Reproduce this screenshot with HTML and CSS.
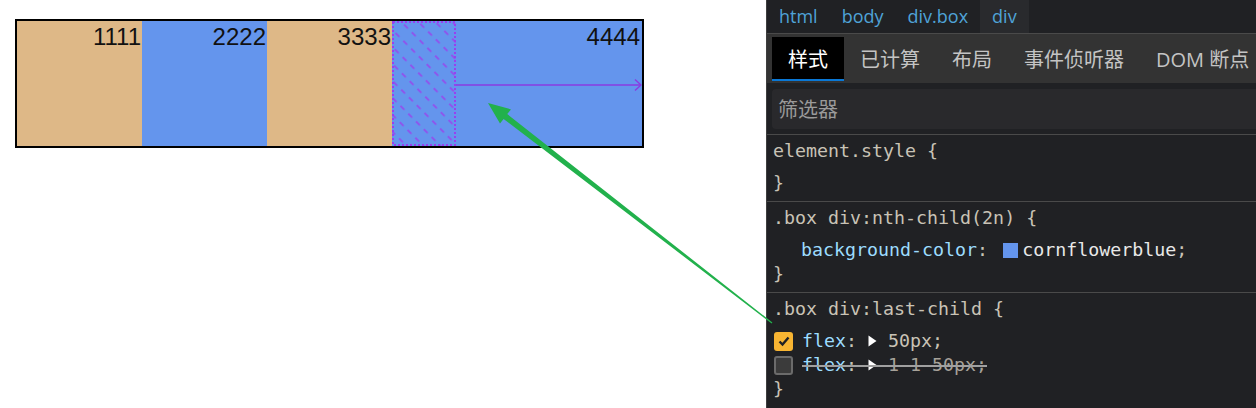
FILE: index.html
```html
<!DOCTYPE html>
<html lang="zh-CN">
<head>
<meta charset="utf-8">
<title>flex devtools</title>
<link rel="stylesheet" href="styles.css">
</head>
<body>
<div class="page">
  <section class="stage">
    <div class="box">
      <div class="item tan">1111</div>
      <div class="item blue">2222</div>
      <div class="item tan">3333</div>
      <div class="item blue last">
        <span class="label">4444</span>
        <svg class="basis" width="64" height="125" viewBox="0 0 64 125">
          <defs>
            <pattern id="hatch" width="12" height="11" patternUnits="userSpaceOnUse" patternTransform="rotate(-45)">
              <line x1="6" y1="0" x2="6" y2="5.5" stroke="#9a44ec" stroke-width="1.5"/>
            </pattern>
          </defs>
          <rect x="0" y="0" width="64" height="125" fill="url(#hatch)"/>
          <rect x="1" y="1" width="62" height="123" fill="none" stroke="#9a3ff0" stroke-width="2" stroke-dasharray="2 2"/>
        </svg>
        <svg class="grow" width="186" height="14" viewBox="0 0 186 14">
          <line x1="0" y1="7" x2="185" y2="7" stroke="#8a3be2" stroke-width="1.6"/>
          <polyline points="179,1.5 185,7 179,12.5" fill="none" stroke="#8a3be2" stroke-width="1.4"/>
        </svg>
      </div>
    </div>
  </section>

  <aside class="devtools">
    <nav class="crumbs">
      <span class="crumb">html</span>
      <span class="crumb">body</span>
      <span class="crumb">div.box</span>
      <span class="crumb current">div</span>
    </nav>
    <div class="tabs">
      <span class="tab active">样式</span>
      <span class="tab">已计算</span>
      <span class="tab">布局</span>
      <span class="tab">事件侦听器</span>
      <span class="tab">DOM 断点</span>
    </div>
    <div class="filter-bar">
      <div class="filter">筛选器</div>
    </div>
    <div class="rules">
      <div class="rule">
        <div class="selector">element.style {</div>
        <div class="close">}</div>
      </div>
      <div class="rule">
        <div class="selector">.box div:nth-child(2n) {</div>
        <div class="decl indent"><span class="prop">background-color</span><span class="punct">: </span><span class="swatch"></span><span class="value">cornflowerblue</span><span class="punct">;</span></div>
        <div class="close">}</div>
      </div>
      <div class="rule last-rule">
        <div class="selector">.box div:last-child {</div>
        <div class="decl">
          <span class="check on"><svg width="14" height="14" viewBox="0 0 14 14"><polyline points="2.5,7.5 5.5,10.5 11.5,3.5" fill="none" stroke="#202124" stroke-width="2.4"/></svg></span>
          <span class="prop">flex</span><span class="punct">: </span><svg class="tri" width="9" height="12" viewBox="0 0 9 12"><polygon points="0.5,0.5 8.5,6 0.5,11.5" fill="#ffffff"/></svg><span class="num">50px</span><span class="punct">;</span>
        </div>
        <div class="decl">
          <span class="check"></span>
          <span class="struck"><span class="prop">flex</span><span class="punct">: </span><svg class="tri" width="9" height="12" viewBox="0 0 9 12"><polygon points="0.5,0.5 8.5,6 0.5,11.5" fill="#ffffff"/></svg><span class="num dim">1 1 50px</span><span class="punct dim">;</span></span>
        </div>
        <div class="close">}</div>
      </div>
    </div>
  </aside>

  <svg class="annotation" width="1256" height="408" viewBox="0 0 1256 408">
    <polygon points="488,103 511,109.4 507.2,114.1 772.4,322.5 771.6,323.5 503.6,118.9 500,123.6" fill="#22b14c"/>
  </svg>
</div>
</body>
</html>
```

FILE: styles.css
```css
* { box-sizing: border-box; }

html, body {
  margin: 0;
  padding: 0;
  background: #ffffff;
}

.page {
  position: relative;
  display: flex;
  width: 1256px;
  height: 408px;
  overflow: hidden;
}

/* ---------- left stage ---------- */
.stage {
  width: 766px;
  flex: none;
  padding: 19px 0 0 15px;
}

.box {
  display: flex;
  width: 629px;
  height: 129px;
  border: 2px solid #000;
}

.item {
  width: 125px;
  flex: none;
  padding: 0 1px 0 0;
  text-align: right;
  font-family: "Liberation Sans", Arial, sans-serif;
  font-size: 24px;
  line-height: 32px;
  color: #111;
}

.tan { background: #deb887; }
.blue { background: #6495ed; }

.item.last {
  flex: 1;
  position: relative;
  padding-right: 2px;
}

.label {
  position: relative;
  z-index: 1;
}

.basis {
  position: absolute;
  left: 0;
  top: 0;
  display: block;
}

.grow {
  position: absolute;
  left: 64px;
  top: 57px;
  display: block;
}

/* ---------- devtools ---------- */
.devtools {
  width: 490px;
  height: 408px;
  flex: none;
  display: flex;
  flex-direction: column;
  background: #202124;
  border-left: 1px solid #3e3e3e;
}

.crumbs {
  display: flex;
  height: 34px;
  flex: none;
  border-bottom: 1px solid #4a4a4a;
  font-family: "Open Sans", "Noto Sans", sans-serif;
  font-size: 18px;
  line-height: 33px;
  color: #4fa3d8;
}

.crumb {
  padding: 0 12px;
}

.crumb.current {
  background: #292a2d;
}

.tabs {
  display: flex;
  flex: none;
  height: 49px;
  padding: 3px 0 2px 5px;
  background: #333333;
  font-family: "Open Sans", "Noto Sans CJK SC", sans-serif;
  font-size: 20px;
  color: #c4c4c4;
  white-space: nowrap;
}

.tab {
  display: flex;
  align-items: center;
  height: 44px;
  padding: 0 16px 1px;
}

.tab.active {
  background: #000000;
  color: #ffffff;
  border-bottom: 2px solid #0a78d6;
  padding-bottom: 0;
}

.filter-bar {
  flex: none;
  height: 52px;
  padding: 6px 0 6px 5px;
  border-bottom: 1px solid #4a4a4a;
}

.filter {
  height: 40px;
  padding-left: 6px;
  border-radius: 4px 0 0 4px;
  background: #29292c;
  font-family: "Noto Sans CJK SC", sans-serif;
  font-size: 20px;
  line-height: 40px;
  color: #9a9a9a;
}

.rules {
  font-family: "DejaVu Sans Mono", "Liberation Mono", monospace;
  font-size: 18.3px;
  line-height: 24px;
  color: #c9c3b6;
}

.rule {
  padding: 4px 0 6px 6px;
  border-bottom: 1px solid #4a4a4a;
}

.rule.last-rule {
  border-bottom: none;
}

.selector,
.close,
.decl span {
  white-space: pre;
}

.selector {
  margin-bottom: 8px;
}

.decl {
  display: flex;
  align-items: center;
  height: 24px;
}

.decl.indent {
  padding-left: 28px;
}

.prop { color: #9cdcfe; }
.punct { color: #c9c3b6; }
.value { color: #e8e8e8; }
.num { color: #c9c3b6; }
.dim { color: #a7a29a; }

.swatch {
  display: inline-block;
  width: 15px;
  height: 15px;
  margin: 0 4px 0 4px;
  background: #6495ed;
}

.check {
  display: flex;
  align-items: center;
  justify-content: center;
  width: 19px;
  height: 19px;
  margin: 0 9px 0 1px;
  border-radius: 3px;
  background: #3b3b3b;
  border: 2px solid #6b6b6b;
}

.check.on {
  background: #f8b532;
  border: none;
}

.check svg { display: block; }

.tri {
  display: inline-block;
  margin: 0 11px 0 0;
}

.struck {
  display: flex;
  align-items: center;
  position: relative;
}

.struck::after {
  content: "";
  position: absolute;
  left: 0;
  right: 0;
  top: 12px;
  height: 2px;
  background: #a0a0a0;
}

.annotation {
  position: absolute;
  left: 0;
  top: 0;
  pointer-events: none;
}
```
